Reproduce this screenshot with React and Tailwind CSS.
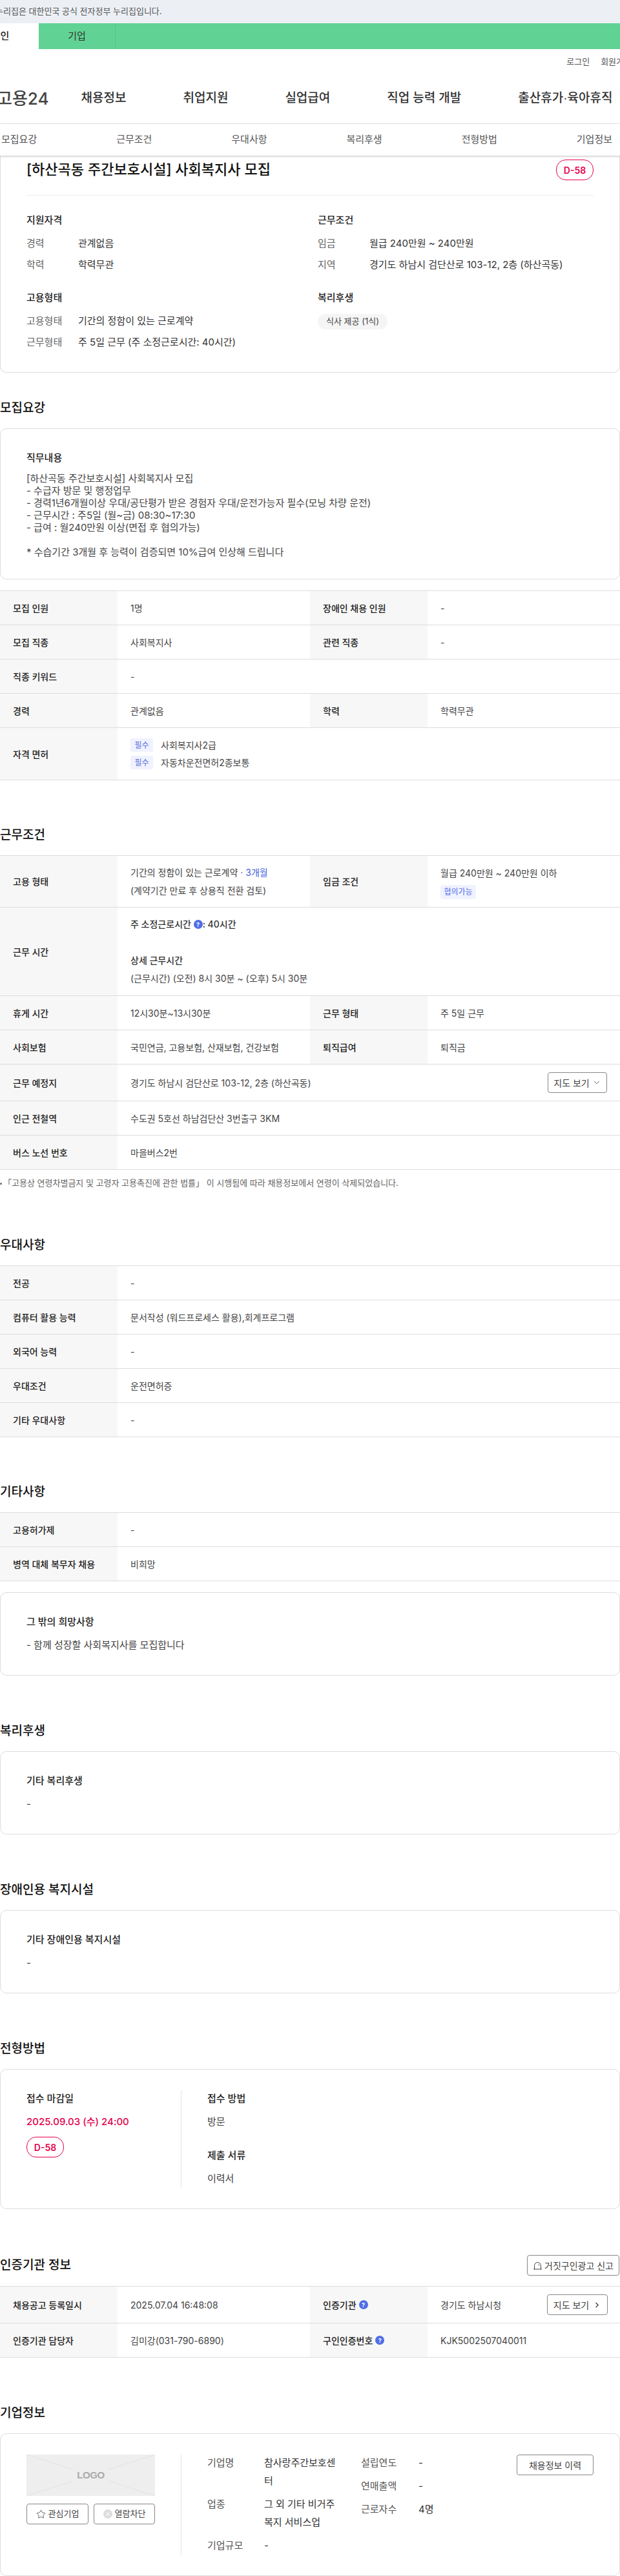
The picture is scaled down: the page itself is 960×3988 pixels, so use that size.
import { ChevronDown, ChevronRight, Star, X } from 'lucide-react';

const FONT = "font-['Inter','Noto_Sans_CJK_KR','Noto_Sans',sans-serif]";

function SectionTitle({ children, className = '' }) {
  return <h2 className={`h-[28px] mb-[17px] text-[19px] leading-[28px] font-medium text-[#111] ${className}`}>{children}</h2>;
}

function DdayBadge() {
  return (
    <span className="flex w-[58px] h-[32px] items-center justify-center rounded-[15px] border border-[#e6004d] text-[14px] font-semibold text-[#e6004d]">
      D-58
    </span>
  );
}

function HelpIcon() {
  return (
    <span className="inline-flex w-[14px] h-[14px] items-center justify-center rounded-full bg-[#4f6ee8] text-[9px] leading-none font-bold text-white">
      ?
    </span>
  );
}

function Cell({ label, children, wide, rowClass }) {
  return (
    <>
      <div className="flex w-[182px] shrink-0 items-center bg-[#f7f7f7] pl-[20px] text-[14px] font-medium text-[#222]">{label}</div>
      <div className={`flex items-center px-[20px] text-[14px] text-[#444] ${wide ? 'flex-1' : 'w-[298px]'} ${rowClass || ''}`}>{children}</div>
    </>
  );
}

function Row({ h = 'h-[53px]', children }) {
  return <div className={`flex border-b border-[#ddd] ${h}`}>{children}</div>;
}

function Table({ children }) {
  return <div className="border-t border-[#ddd]">{children}</div>;
}

function Required({ children }) {
  return (
    <div className="flex h-[21px] items-center gap-[12px]">
      <span className="flex w-[35px] h-[21px] items-center justify-center rounded-[3px] bg-[#f0f2ff] text-[12px] text-[#5a6fe0]">필수</span>
      <span>{children}</span>
    </div>
  );
}

function NoteCard({ title, children }) {
  return (
    <div className="h-[129px] rounded-[10px] border border-[#ddd] px-[40px] pt-[34px]">
      <div className="text-[15px] leading-[22px] font-medium text-[#222]">{title}</div>
      <div className="mt-[14px] text-[15px] leading-[22px] text-[#444]">{children}</div>
    </div>
  );
}

function InfoLine({ label, children }) {
  return (
    <div className="flex h-[22px] items-center text-[15px] leading-[22px]">
      <span className="w-[80px] text-[#666]">{label}</span>
      <span className="text-[#333]">{children}</span>
    </div>
  );
}

function CompanyRow({ label, labelWidth, valueWidth, children }) {
  return (
    <div className="flex text-[15px] leading-[28px]">
      <span className={`shrink-0 text-[#555] ${labelWidth}`}>{label}</span>
      <span className={`text-[#333] ${valueWidth}`}>{children}</span>
    </div>
  );
}

export default function App() {
  return (
    <div className={`w-[960px] h-[3988px] overflow-hidden bg-white ${FONT}`}>
      <div className="flex h-[36px] items-center overflow-hidden bg-[#ecf0f5]">
        <span className="-ml-[7px] whitespace-nowrap text-[13px] text-[#555]">누리집은 대한민국 공식 전자정부 누리집입니다.</span>
      </div>

      <div className="flex h-[40px] overflow-hidden bg-[#60d394] text-[15px] text-[#333]">
        <div className="-ml-[59px] flex w-[119px] shrink-0 items-center justify-center bg-white font-medium text-[#222]">개인</div>
        <div className="flex w-[119px] shrink-0 items-center justify-center border-r border-[#56c488]">기업</div>
      </div>

      <div className="flex h-[40px] items-center justify-end gap-[17px] overflow-hidden text-[13px] text-[#555]">
        <span>로그인</span>
        <span className="-mr-[18px]">회원가입</span>
      </div>

      <div className="flex h-[76px] items-center overflow-hidden border-b border-[#eee] pb-[2px]">
        <span className="-ml-[5px] mr-[50px] shrink-0 text-[26px] font-medium text-[#444]">고용24</span>
        <nav className="flex shrink-0 gap-[88px] text-[19px] font-medium text-[#333]">
          <span>채용정보</span>
          <span>취업지원</span>
          <span>실업급여</span>
          <span>직업 능력 개발</span>
          <span>출산휴가<span className="font-['Liberation_Sans',sans-serif]">·</span>육아휴직</span>
        </nav>
      </div>

      <div className="relative z-10 flex h-[49px] items-center justify-between bg-white pl-[2px] pr-[12px] text-[15px] text-[#555] shadow-[0_1px_3px_rgba(0,0,0,0.25)]">
        <span>모집요강</span>
        <span>근무조건</span>
        <span>우대사항</span>
        <span>복리후생</span>
        <span>전형방법</span>
        <span>기업정보</span>
      </div>

      {/* summary card */}
      <div className="h-[336px] rounded-b-[10px] border-x border-b border-[#ddd] px-[40px] pt-[6px]">
        <div className="flex h-[56px] items-start justify-between border-b border-[#eee]">
          <h1 className="text-[22px] leading-[30px] font-medium text-[#111]">[하산곡동 주간보호시설] 사회복지사 모집</h1>
          <DdayBadge />
        </div>
        <div className="grid grid-cols-[451px_1fr] pt-[27px]">
          <div>
            <div className="mb-[14px] text-[15px] leading-[22px] font-medium text-[#222]">지원자격</div>
            <div className="flex flex-col gap-[11px]">
              <InfoLine label="경력">관계없음</InfoLine>
              <InfoLine label="학력">학력무관</InfoLine>
            </div>
          </div>
          <div>
            <div className="mb-[14px] text-[15px] leading-[22px] font-medium text-[#222]">근무조건</div>
            <div className="flex flex-col gap-[11px]">
              <InfoLine label="임금">월급 240만원 ~ 240만원</InfoLine>
              <InfoLine label="지역">경기도 하남시 검단산로 103-12, 2층 (하산곡동)</InfoLine>
            </div>
          </div>
          <div className="mt-[29px]">
            <div className="mb-[14px] text-[15px] leading-[22px] font-medium text-[#222]">고용형태</div>
            <div className="flex flex-col gap-[11px]">
              <InfoLine label="고용형태">기간의 정함이 있는 근로계약</InfoLine>
              <InfoLine label="근무형태">주 5일 근무 (주 소정근로시간: 40시간)</InfoLine>
            </div>
          </div>
          <div className="mt-[29px]">
            <div className="mb-[12px] text-[15px] leading-[22px] font-medium text-[#222]">복리후생</div>
            <span className="inline-flex h-[24px] w-[108px] items-center justify-center rounded-full bg-[#f5f5f5] text-[13px] text-[#444]">식사 제공 (1식)</span>
          </div>
        </div>
      </div>

      <SectionTitle className="mt-[41px]">모집요강</SectionTitle>
      <div className="h-[234px] rounded-[10px] border border-[#ddd] px-[40px] pt-[34px]">
        <div className="text-[15px] leading-[22px] font-medium text-[#222]">직무내용</div>
        <div className="mt-[11px] text-[15px] leading-[19px] text-[#444]">
          <div>[하산곡동 주간보호시설] 사회복지사 모집</div>
          <div>- 수급자 방문 및 행정업무</div>
          <div>- 경력1년6개월이상 우대/공단평가 받은 경험자 우대/운전가능자 필수(모닝 차량 운전)</div>
          <div>- 근무시간 : 주5일 (월~금) 08:30~17:30</div>
          <div>- 급여 : 월240만원 이상(면접 후 협의가능)</div>
          <div className="h-[19px]" />
          <div>* 수습기간 3개월 후 능력이 검증되면 10%급여 인상해 드립니다</div>
        </div>
      </div>

      <div className="mt-[17px]">
        <Table>
          <Row><Cell label="모집 인원">1명</Cell><Cell label="장애인 채용 인원">-</Cell></Row>
          <Row><Cell label="모집 직종">사회복지사</Cell><Cell label="관련 직종">-</Cell></Row>
          <Row><Cell label="직종 키워드" wide>-</Cell></Row>
          <Row><Cell label="경력">관계없음</Cell><Cell label="학력">학력무관</Cell></Row>
          <Row h="h-[81px]">
            <Cell label="자격 면허" wide>
              <div className="flex flex-col gap-[6px]">
                <Required>사회복지사2급</Required>
                <Required>자동차운전면허2종보통</Required>
              </div>
            </Cell>
          </Row>
        </Table>
      </div>

      <SectionTitle className="mt-[71px]">근무조건</SectionTitle>
      <Table>
        <Row h="h-[80px]">
          <Cell label="고용 형태">
            <div className="leading-[28px]">
              <div>기간의 정함이 있는 근로계약 <span className="text-[#3f5fe0]">· 3개월</span></div>
              <div>(계약기간 만료 후 상용직 전환 검토)</div>
            </div>
          </Cell>
          <Cell label="임금 조건">
            <div>
              <div className="leading-[28px]">월급 240만원 ~ 240만원 이하</div>
              <span className="mt-[4px] flex h-[22px] w-[55px] items-center justify-center rounded-[4px] bg-[#f0f2ff] text-[12px] text-[#4f6ee8]">협의가능</span>
            </div>
          </Cell>
        </Row>
        <Row h="h-[137px]">
          <Cell label="근무 시간" wide>
            <div className="leading-[28px]">
              <div className="flex items-center font-medium text-[#333]">주 소정근로시간&nbsp;<HelpIcon />: 40시간</div>
              <div className="h-[28px]" />
              <div className="font-medium text-[#333]">상세 근무시간</div>
              <div>(근무시간) (오전) 8시 30분 ~ (오후) 5시 30분</div>
            </div>
          </Cell>
        </Row>
        <Row><Cell label="휴게 시간">12시30분~13시30분</Cell><Cell label="근무 형태">주 5일 근무</Cell></Row>
        <Row><Cell label="사회보험">국민연금, 고용보험, 산재보험, 건강보험</Cell><Cell label="퇴직급여">퇴직금</Cell></Row>
        <Row h="h-[57px]">
          <Cell label="근무 예정지" wide>
            <div className="flex flex-1 items-center justify-between">
              <span>경기도 하남시 검단산로 103-12, 2층 (하산곡동)</span>
              <button className="flex h-[32px] w-[92px] items-center justify-center gap-[4px] rounded-[4px] border border-[#888] text-[14px] text-[#444]">
                지도 보기 <ChevronDown size={14} strokeWidth={1.5} />
              </button>
            </div>
          </Cell>
        </Row>
        <Row><Cell label="인근 전철역" wide>수도권 5호선 하남검단산 3번출구 3KM</Cell></Row>
        <Row><Cell label="버스 노선 번호" wide>마을버스2번</Cell></Row>
      </Table>
      <div className="mt-[11px] flex h-[20px] items-center text-[13px] text-[#666]">
        <span className="mr-[2px] h-[3px] w-[3px] rounded-full bg-[#666]" />
        「고용상 연령차별금지 및 고령자 고용촉진에 관한 법률」 이 시행됨에 따라 채용정보에서 연령이 삭제되었습니다.
      </div>

      <SectionTitle className="mt-[72px]">우대사항</SectionTitle>
      <Table>
        <Row><Cell label="전공" wide>-</Cell></Row>
        <Row><Cell label="컴퓨터 활용 능력" wide>문서작성 (워드프로세스 활용),회계프로그램</Cell></Row>
        <Row><Cell label="외국어 능력" wide>-</Cell></Row>
        <Row><Cell label="우대조건" wide>운전면허증</Cell></Row>
        <Row><Cell label="기타 우대사항" wide>-</Cell></Row>
      </Table>

      <SectionTitle className="mt-[71px]">기타사항</SectionTitle>
      <Table>
        <Row><Cell label="고용허가제" wide>-</Cell></Row>
        <Row><Cell label="병역 대체 복무자 채용" wide>비희망</Cell></Row>
      </Table>
      <div className="mt-[17px]">
        <NoteCard title="그 밖의 희망사항">- 함께 성장할 사회복지사를 모집합니다</NoteCard>
      </div>

      <SectionTitle className="mt-[72px]">복리후생</SectionTitle>
      <NoteCard title="기타 복리후생">-</NoteCard>

      <SectionTitle className="mt-[72px]">장애인용 복지시설</SectionTitle>
      <NoteCard title="기타 장애인용 복지시설">-</NoteCard>

      <SectionTitle className="mt-[72px]">전형방법</SectionTitle>
      <div className="h-[217px] rounded-[10px] border border-[#ddd] px-[40px] pt-[32px]">
        <div className="flex h-[152px]">
          <div className="w-[240px] border-r border-[#e5e5e5] pt-[2px]">
            <div className="text-[15px] leading-[22px] font-medium text-[#222]">접수 마감일</div>
            <div className="mt-[14px] text-[15px] leading-[22px] font-medium text-[#e6004d]">2025.09.03 (수) 24:00</div>
            <div className="mt-[12px]"><DdayBadge /></div>
          </div>
          <div className="pl-[40px] pt-[2px] text-[15px] leading-[22px]">
            <div className="font-medium text-[#222]">접수 방법</div>
            <div className="mt-[14px] text-[#444]">방문</div>
            <div className="mt-[30px] font-medium text-[#222]">제출 서류</div>
            <div className="mt-[14px] text-[#444]">이력서</div>
          </div>
        </div>
      </div>

      <div className="mt-[71px] mb-[16px] flex h-[32px] items-center justify-between">
        <h2 className="text-[19px] font-medium text-[#111]">인증기관 정보</h2>
        <button className="mr-px flex h-[32px] w-[143px] items-center justify-center gap-[3px] rounded-[4px] border border-[#888] text-[14px] text-[#444]">
          <svg width="15" height="15" viewBox="0 0 15 15" fill="none" stroke="#444" strokeWidth="1">
            <path d="M1 13h13M2.5 13V7.5a5 5 0 0 1 10 0V13" />
            <path d="M9.5 5.5v2" />
          </svg>
          거짓구인광고 신고
        </button>
      </div>
      <Table>
        <Row h="h-[57px]">
          <Cell label="채용공고 등록일시">2025.07.04 16:48:08</Cell>
          <Cell label={<span className="flex items-center gap-[4px]">인증기관 <HelpIcon /></span>}>
            <div className="flex flex-1 items-center justify-between -mr-px">
              <span>경기도 하남시청</span>
              <button className="flex h-[32px] w-[94px] items-center justify-center gap-[6px] rounded-[4px] border border-[#888] text-[14px] text-[#444]">
                지도 보기 <ChevronRight size={13} strokeWidth={2.5} />
              </button>
            </div>
          </Cell>
        </Row>
        <Row>
          <Cell label="인증기관 담당자">김미강(031-790-6890)</Cell>
          <Cell label={<span className="flex items-center gap-[4px]">구인인증번호 <HelpIcon /></span>}>KJK5002507040011</Cell>
        </Row>
      </Table>

      <SectionTitle className="mt-[72px]">기업정보</SectionTitle>
      <div className="h-[221px] rounded-[10px] border border-[#ddd] px-[40px] pt-[32px]">
        <div className="flex h-[156px]">
          <div className="w-[240px] shrink-0 border-r border-[#e5e5e5] pr-[40px]">
            <div className="relative flex h-[64px] items-center justify-center overflow-hidden bg-[#eee]">
              <svg className="absolute inset-0" width="199" height="64" viewBox="0 0 199 64" fill="none" stroke="#e2e2e2">
                <path d="M0 0L199 64M199 0L0 64" />
              </svg>
              <span className="relative flex h-[20px] w-[55px] items-center justify-center bg-[#eee] font-['Liberation_Sans',sans-serif] text-[15px] font-bold tracking-tight text-[#aaa]">LOGO</span>
            </div>
            <div className="mt-[12px] flex justify-between">
              <button className="flex h-[32px] w-[96px] items-center justify-center gap-[4px] rounded-[4px] border border-[#888] text-[13px] text-[#444]">
                <Star size={15} strokeWidth={1.3} /> 관심기업
              </button>
              <button className="flex h-[32px] w-[95px] items-center justify-center gap-[4px] rounded-[4px] border border-[#888] text-[13px] text-[#444]">
                <span className="flex h-[14px] w-[14px] items-center justify-center rounded-full bg-[#ddd] text-white"><X size={10} strokeWidth={2.5} /></span> 열람차단
              </button>
            </div>
          </div>
          <div className="flex w-[278px] shrink-0 flex-col gap-[8px] pl-[40px] -mt-px">
            <CompanyRow label="기업명" labelWidth="w-[88px]" valueWidth="w-[111px]">참사랑주간보호센터</CompanyRow>
            <CompanyRow label="업종" labelWidth="w-[88px]" valueWidth="w-[111px]">그 외 기타 비거주 복지 서비스업</CompanyRow>
            <CompanyRow label="기업규모" labelWidth="w-[88px]" valueWidth="w-[111px]">-</CompanyRow>
          </div>
          <div className="flex w-[200px] flex-col gap-[8px] -mt-px">
            <CompanyRow label="설립연도" labelWidth="w-[89px]">-</CompanyRow>
            <CompanyRow label="연매출액" labelWidth="w-[89px]">-</CompanyRow>
            <CompanyRow label="근로자수" labelWidth="w-[89px]">4명</CompanyRow>
          </div>
          <button className="ml-auto flex h-[32px] w-[119px] items-center justify-center rounded-[4px] border border-[#888] text-[14px] text-[#444]">채용정보 이력</button>
        </div>
      </div>
    </div>
  );
}
